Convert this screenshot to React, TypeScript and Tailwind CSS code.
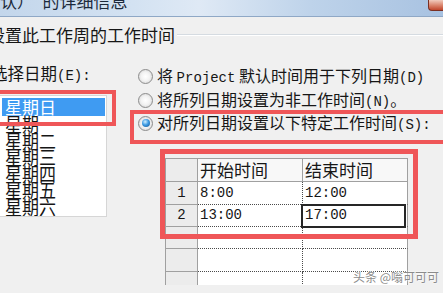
import React from "react";

const L = ({ children }: { children: React.ReactNode }) => (
  <span className="font-['Liberation_Mono',monospace] text-[14px]">{children}</span>
);

function Radio({ checked }: { checked?: boolean }) {
  return (
    <span className="w-[15px] h-[15px] rounded-full border border-[#8c8c8c] bg-[radial-gradient(circle_at_50%_50%,#ffffff_0%,#f3f3f3_45%,#cfcfcf_100%)] flex items-center justify-center shrink-0">
      {checked && (
        <span className="w-[8px] h-[8px] rounded-full bg-[radial-gradient(circle_at_40%_35%,#d2f0ff_0%,#3d9be4_45%,#13508c_100%)]" />
      )}
    </span>
  );
}

const days = ["星期日", "星期一", "星期二", "星期三", "星期四", "星期五", "星期六"];

const rows = [
  { n: "1", a: "8:00", b: "12:00", h: "h-[23px]", sel: false },
  { n: "2", a: "13:00", b: "17:00", h: "h-[22px]", sel: true },
  { n: "", a: "", b: "", h: "h-[22px]", sel: false },
  { n: "", a: "", b: "", h: "h-[23px]", sel: false },
  { n: "", a: "", b: "", h: "h-[22px]", sel: false },
];

export default function App() {
  return (
    <div className="relative w-[443px] h-[293px] overflow-hidden bg-[#f0f0f0] text-[#161616] font-['Noto_Sans_CJK_SC','Noto_Sans',sans-serif]">
      {/* title bar */}
      <div className="h-[17px] flex justify-between overflow-hidden border-b border-[#8fa8c6] bg-[linear-gradient(90deg,#c3d6eb_0%,#d3e2f2_30%,#dfe9f5_45%,#bed3ea_70%,#a8c2e1_100%)]">
        <div className="-ml-[17px] -mt-[8px] text-[17px] leading-[17px] whitespace-nowrap text-[#1c2a3c]">
          默认）　的详细信息
        </div>
        <div className="w-[15px] h-[11px] rounded-bl-[4px] border-l border-b border-[#7a2f22] bg-[linear-gradient(180deg,#f1cbbd_0%,#d77b62_60%,#c0462c_100%)]" />
      </div>

      {/* section header */}
      <div className="mt-[9px] h-[18px] flex items-center">
        <div className="-ml-[12px] text-[17px] leading-[18px] whitespace-nowrap">设置此工作周的工作时间</div>
        <div className="ml-[2px] flex-1 border-t border-b border-t-[#d5dbe1] border-b-white" />
      </div>

      {/* main row */}
      <div className="mt-[20px] flex items-start">
        {/* left column */}
        <div className="w-[107px] shrink-0">
          <div className="-ml-[9px] h-[18px] text-[16.5px] leading-[18px] whitespace-nowrap">
            选择日期<L>(E):</L>
          </div>
          <div className="mt-[13px] w-[107px] h-[122px] bg-white border-t border-b border-r border-[#d6d6d6] pt-[2px] pl-[2px] pr-[1px] overflow-hidden">
            {days.map((d, i) =>
              i === 0 ? (
                <div key={d} className="h-[18px] bg-[#3f9bf2] text-white text-[17px] leading-[18px] pl-[3px]">
                  {d}
                </div>
              ) : (
                <div key={d} className="h-[16.6px] text-[17px] leading-[16.6px] pl-[3px]">
                  <span className="inline-block scale-y-[1.12]">{d}</span>
                </div>
              )
            )}
          </div>
        </div>

        {/* right column */}
        <div className="ml-[31px] pt-[3px] flex flex-col">
          <div className="h-[18px] flex items-center gap-[4px] whitespace-nowrap text-[16px] leading-[18px]">
            <Radio />
            <span>
              将 <L>Project</L> 默认时间用于下列日期<L>(D)</L>
            </span>
          </div>
          <div className="mt-[6px] h-[18px] flex items-center gap-[4px] whitespace-nowrap text-[16px] leading-[18px]">
            <Radio />
            <span>
              将所列日期设置为非工作时间<L>(N)</L>。
            </span>
          </div>
          <div className="mt-[5px] h-[18px] flex items-center gap-[4px] whitespace-nowrap text-[16px] leading-[18px]">
            <Radio checked />
            <span>
              对所列日期设置以下特定工作时间<L>(S):</L>
            </span>
          </div>

          {/* table */}
          <div className="mt-[26px] ml-[27px] w-[243px] h-[127px] overflow-hidden border-l border-[#a0a0a0] bg-white">
            <div className="h-[24px] flex border-t border-b border-[#a0a0a0]">
              <div className="w-[32px] bg-[#ececec] border-r border-[#a0a0a0]" />
              <div className="w-[105px] bg-[#f8f8f8] border-r border-[#a0a0a0] pl-[2px] text-[17px] leading-[22px]">开始时间</div>
              <div className="w-[105px] bg-[#f8f8f8] border-r border-[#a0a0a0] pl-[2px] text-[17px] leading-[22px]">结束时间</div>
            </div>
            {rows.map((r, i) => (
              <div key={i} className={`${r.h} flex`}>
                <div className="w-[32px] bg-[#ececec] border-r border-b border-[#a0a0a0] flex items-center justify-center">
                  <L>{r.n}</L>
                </div>
                <div className="w-[105px] border-r border-b border-dotted border-[#4a4a4a] pl-[2px] flex items-center">
                  <L>{r.a}</L>
                </div>
                <div className="relative w-[105px] border-r border-r-[#a0a0a0] border-b border-b-[#4a4a4a] border-dotted [border-right-style:solid] pl-[2px] flex items-center">
                  <L>{r.b}</L>
                  {r.sel && <div className="absolute -left-[2px] -top-[1px] w-[105px] h-[24px] border-2 border-[#262626]" />}
                </div>
              </div>
            ))}
          </div>
        </div>
      </div>

      {/* red annotation boxes */}
      <div className="absolute left-[-6px] top-[90px] w-[122px] h-[36px] border-[4px] border-[#ef5658]" />
      <div className="absolute left-[130px] top-[110px] w-[330px] h-[34px] border-[4px] border-[#ef5658]" />
      <div className="absolute left-[160px] top-[149px] w-[258px] h-[90px] border-[5px] border-[#ef5658]" />

      {/* watermark */}
      <div className="absolute left-[353px] top-[270px] text-[12px] leading-[14px] whitespace-nowrap text-[#8c8c8c] [text-shadow:0_0_2px_#fff,0_0_2px_#fff]">
        头条 @嗡可可可
      </div>
    </div>
  );
}
